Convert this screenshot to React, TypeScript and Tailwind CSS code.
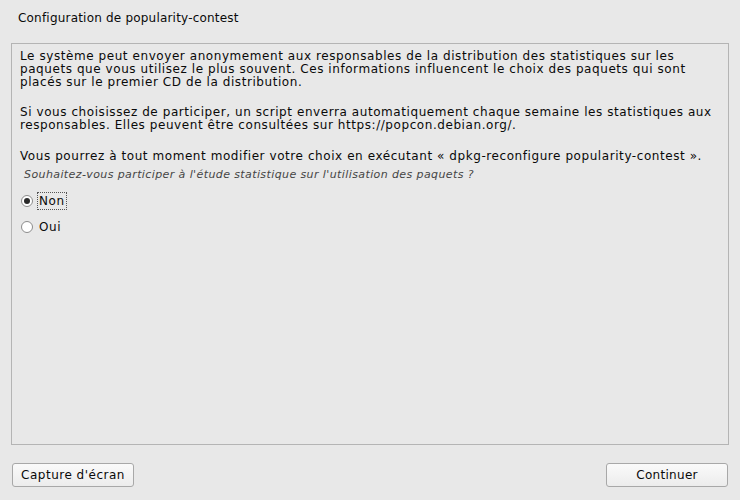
import React from 'react'

const FONT = { fontFamily: '"DejaVu Sans", Verdana, sans-serif' }

function Radio({ checked, label, focused }: { checked: boolean; label: string; focused?: boolean }) {
  return (
    <label className="flex h-[18px] items-center gap-[5px]">
      <span className="flex h-[12px] w-[12px] items-center justify-center rounded-full border border-[#8c8c8c] bg-white">
        {checked && <span className="h-[6px] w-[6px] rounded-full bg-[#2a2a2a]" />}
      </span>
      <span
        className={`px-[1px] leading-[16px] tracking-[0.6px] ${focused ? 'outline outline-1 outline-dotted outline-[#555]' : ''}`}
      >
        {label}
      </span>
    </label>
  )
}

export default function App() {
  return (
    <div
      className="flex h-[500px] w-[740px] flex-col bg-[#e8e8e8] text-[12px] text-[#0a0a0a]"
      style={FONT}
    >
      <div className="px-[18px] pt-[10px] pb-[17px] leading-[16px] tracking-[0.2px]">
        Configuration de popularity-contest
      </div>

      <div className="mx-[11px] flex h-[402px] flex-col border border-[#b4b4b4] px-[8px] pt-[6px]">
        <div className="tracking-[0.57px]">
          <p className="leading-[13px]">
            Le système peut envoyer anonymement aux responsables de la distribution des statistiques sur les
            paquets que vous utilisez le plus souvent. Ces informations influencent le choix des paquets qui sont
            placés sur le premier CD de la distribution.
          </p>
          <p className="mt-[17px] leading-[13px]">
            Si vous choisissez de participer, un script enverra automatiquement chaque semaine les statistiques aux
            responsables. Elles peuvent être consultées sur https://popcon.debian.org/.
          </p>
          <p className="mt-[18px] leading-[13px]">
            Vous pourrez à tout moment modifier votre choix en exécutant « dpkg-reconfigure popularity-contest ».
          </p>
        </div>
        <p className="mt-[5px] pl-[4px] text-[11px] italic leading-[13px] tracking-[0.4px] text-[#454545]">
          Souhaitez-vous participer à l'étude statistique sur l'utilisation des paquets ?
        </p>
        <div className="mt-[11px] flex flex-col gap-[8px] pl-[1px]">
          <Radio checked label="Non" focused />
          <Radio checked={false} label="Oui" />
        </div>
      </div>

      <div className="mx-[12px] mt-[18px] flex justify-between">
        <button className="h-[24px] w-[122px] rounded-[3px] border border-[#a8a8a8] bg-gradient-to-b from-[#fafafa] to-[#ececec] text-[12px] tracking-[0.5px] text-[#0a0a0a]">
          Capture d'écran
        </button>
        <button className="h-[24px] w-[122px] rounded-[3px] border border-[#a8a8a8] bg-gradient-to-b from-[#fafafa] to-[#ececec] text-[12px] tracking-[0.3px] text-[#0a0a0a]">
          Continuer
        </button>
      </div>
    </div>
  )
}
